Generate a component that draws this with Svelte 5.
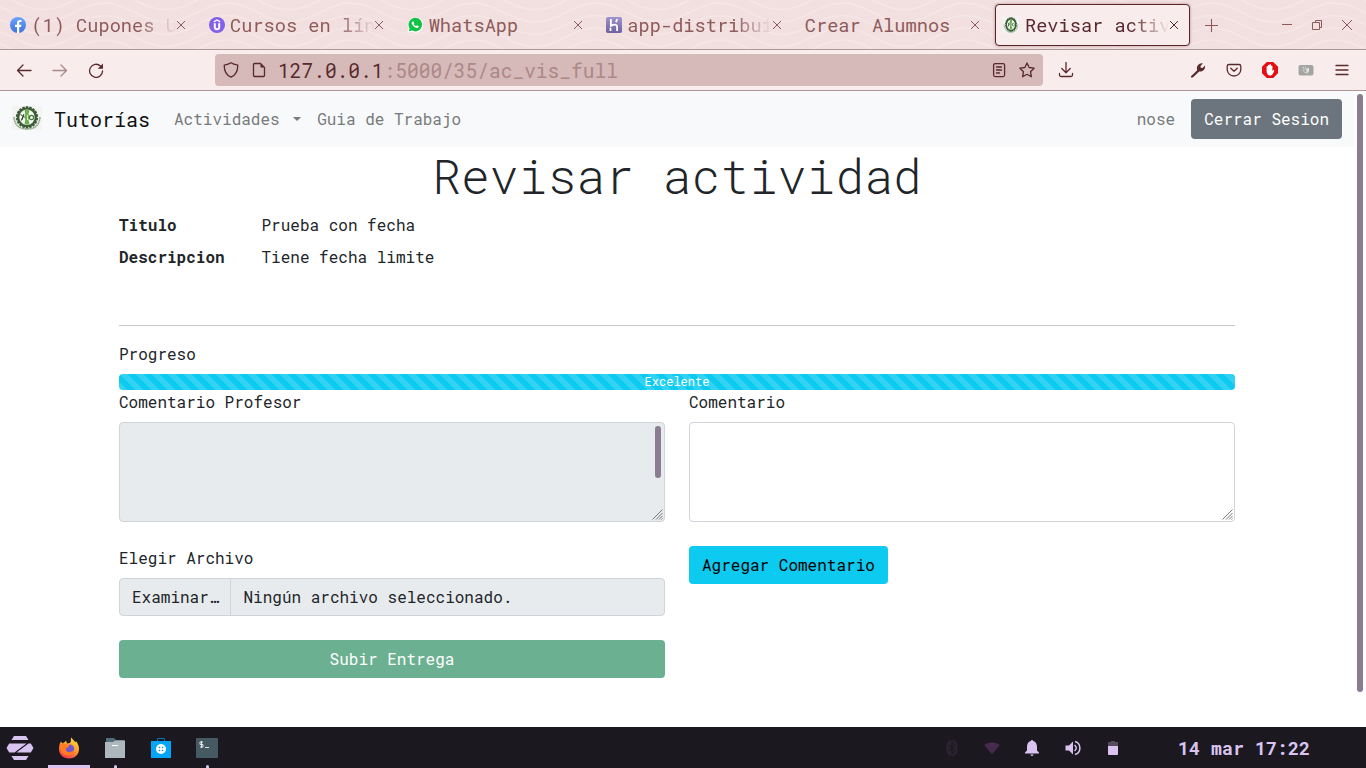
<script>
  const tabs = [
    { icon: 'facebook', title: '(1) Cupones U', fade: true },
    { icon: 'udemy', title: 'Cursos en lín', fade: true },
    { icon: 'whatsapp', title: 'WhatsApp' },
    { icon: 'heroku', title: 'app-distribui', fade: true },
    { icon: '', title: 'Crear Alumnos' },
    { icon: 'seal', title: 'Revisar activ', fade: true, active: true }
  ];

  // Decorative waves of the tab strip: 123px period, 12.3px apart.
  const half = 30.75;
  const waves = Array.from({ length: 7 }, (_, i) => {
    const y = -21.5 + i * 12.3;
    let d = `M-18.5 ${y}`;
    for (let k = 0; k < 12; k++) {
      d += ` c${half * 0.76} 0 ${half * 1.24} 19 ${half * 2} 19 s${half * 1.24} -19 ${half * 2} -19`;
    }
    return d;
  });
  const teeth = Array.from({ length: 18 }, (_, i) => i * 20);
</script>

{#snippet seal()}
  <svg class="seal" viewBox="0 0 30 24" preserveAspectRatio="none">
    <rect width="30" height="24" fill="#f4f5f3" />
    <path d="M2 11 Q3 23 15 23 Q27 23 28 11" fill="none" stroke="#7fa077" stroke-width="1.5" stroke-dasharray="1.5 .5" />
    {#each teeth as angle}
      <rect x="13.7" y="0.2" width="2.6" height="3" fill="#3c5a36" transform={`rotate(${angle} 15 11.3)`} />
    {/each}
    <circle cx="15" cy="11.3" r="8.8" fill="#f4f8f0" stroke="#3c5a36" stroke-width="2.2" />
    <path d="M12.500 4h5l-1 4.500 2 2.500-2 2.500 1 5h-5l.8-5-1.300-2.500 1.300-2.500z" fill="#69b04f" />
    <path d="M8.500 8.500l3 2-2 4M12 8l-2.500 6" fill="none" stroke="#333b32" stroke-width="1" />
    <path d="M15.500 9v5" stroke="#e7f2df" stroke-width=".9" />
    <circle cx="19.500" cy="11.500" r="2.100" fill="none" stroke="#48763e" stroke-width="1.200" />
  </svg>
{/snippet}

<div class="screen">
  <header class="tabstrip">
    <svg class="waves" viewBox="0 0 1366 49">
      {#each waves as d}<path {d} />{/each}
    </svg>
    {#each tabs as tab}
      <div class="tab" class:active={tab.active}>
        {#if tab.icon === 'facebook'}
          <svg class="fav" viewBox="0 0 16 16"><defs><linearGradient id="fb" x2="0" y2="1"><stop stop-color="#6ba4fa" /><stop offset="1" stop-color="#3f72e0" /></linearGradient></defs><circle cx="8" cy="8" r="8" fill="url(#fb)" /><path d="M7 16V10H5V7.800h2V6.300C7 4 8.100 3 10 3h1.400v2h-1c-.9 0-1.200.4-1.200 1.200v1.600h2.200L11 10H9.200v6z" fill="#fff" /></svg>
        {:else if tab.icon === 'udemy'}
          <svg class="fav" viewBox="0 0 16 16"><circle cx="8" cy="8" r="8" fill="#8460e8" /><path d="M4.800 4.800L8 3l3.200 1.800" fill="none" stroke="#fff" stroke-width="1.400" /><path d="M5.800 6.300v4q0 2 2.200 2t2.200-2v-4" fill="none" stroke="#fff" stroke-width="2" /></svg>
        {:else if tab.icon === 'whatsapp'}
          <svg class="fav" viewBox="0 0 16 16"><path d="M.3 15.800l1.200-4.200A7.800 7.800 0 1 1 4.600 14.800z" fill="#fff" /><path d="M1.800 14.300l.8-2.900A6.800 6.800 0 1 1 5 13.600z" fill="#12c348" /><path d="M5.400 4.400c-1 .7-1 2 .2 3.600 1.300 1.800 3.400 3.200 4.800 3 1-.2 1.400-.9 1.300-1.700L9.900 8.200l-.9 1c-1-.4-1.800-1.200-2.300-2.100l.6-.9-.7-1.800z" fill="#fff" /></svg>
        {:else if tab.icon === 'heroku'}
          <svg class="fav" viewBox="0 0 16 16"><defs><linearGradient id="hk" x2="0" y2="1"><stop stop-color="#9e94ce" /><stop offset="1" stop-color="#6e619f" /></linearGradient></defs><rect width="16" height="16" rx="1.800" fill="url(#hk)" /><path d="M4.900 2v6.900q3-1.500 5-1.100 1.200.3 1.200 2V14M4.500 10.800V14M11 2q0 1.800-1.300 3" fill="none" stroke="#fff" stroke-width="1.800" /></svg>
        {:else if tab.icon === 'seal'}
          <span class="fav">{@render seal()}</span>
        {/if}
        <span class="title" class:fade={tab.fade}>{tab.title}</span>
        <svg class="close" viewBox="0 0 10 10"><path d="M1 1l8 8M9 1l-8 8" /></svg>
      </div>
    {/each}
    <svg class="newtab" viewBox="0 0 12 12"><path d="M6 0v12M0 6h12" /></svg>
    <div class="winctl">
      <svg viewBox="0 0 12 12"><path d="M1 5.500h10" /></svg>
      <svg viewBox="0 0 12 12"><path d="M1.500 3.500h7v7h-7zM4.500 3.500v-2h6v7h-2" /></svg>
      <svg viewBox="0 0 12 12"><path d="M1 1l10 10M11 1L1 11" /></svg>
    </div>
  </header>

  <div class="toolbar">
    <div class="nav">
      <svg viewBox="0 0 16 16"><path d="M15 8.500H1.500M7 3L1.500 8.500 7 14" /></svg>
      <svg class="dim" viewBox="0 0 16 16"><path d="M1 8.500h13.500M9 3l5.500 5.500L9 14" /></svg>
      <svg viewBox="0 0 16 16"><path d="M14.600 8.800A6.500 6.500 0 1 1 12.500 4" /><path d="M15 1.500v5.300H9.700z" class="solid" /></svg>
    </div>
    <div class="url">
      <svg viewBox="0 0 16 16"><path d="M8 .8C6 2.300 3.800 2.800 1.200 3.200c0 5.800 1.600 9.800 6.800 12 5.200-2.200 6.800-6.200 6.800-12C12.200 2.800 10 2.300 8 .8z" /></svg>
      <svg viewBox="0 0 16 16"><path d="M3.500 1.500h6l4 4v8q0 1-1 1h-9q-1 0-1-1v-11q0-1 1-1z" /><path d="M9.500 1.500v4h4z" class="solid" /></svg>
      <span class="address"><b>127.0.0.1</b>:5000/35/ac_vis_full</span>
      <svg viewBox="0 0 16 16"><rect x="2.600" y="1.600" width="11" height="13" rx="1.500" /><path d="M5.500 5h5M5.500 8h5M5.500 11h3" /></svg>
      <svg viewBox="0 0 16 16"><path d="M8 1l2.100 4.500 5 .7-3.600 3.500.9 5L8 12.300l-4.400 2.400.9-5L.9 6.200l5-.7z" /></svg>
    </div>
    <svg class="download" viewBox="0 0 16 16"><path d="M8 .5v10M3.800 6.500L8 10.700l4.200-4.200M1.500 11.500v1.500q0 1.500 1.500 1.500h10q1.500 0 1.500-1.500v-1.500" /></svg>
    <div class="tools">
      <svg viewBox="0 0 16 16"><path class="solid" d="M1 14.300l6.200-6c-.8-2.800 0-5 2-6.300 1.300-.8 2.600-.9 3.600-.6l-2.300 2.500.2 1.800 1.900.2L15 3.500c.5 3.800-2 6.500-5.800 6L2.800 15.500H1z" /></svg>
      <svg viewBox="0 0 16 16"><path d="M3 2.500h10q1.800 0 1.800 1.800v3.200a6.800 6.500 0 0 1-13.600 0V4.300Q1.200 2.500 3 2.500z" /><path d="M4.800 6.300L8 9.300l3.200-3" /></svg>
      <svg viewBox="0 0 16 16"><path d="M4.800 0h6.400L16 4.800v6.400L11.200 16H4.800L0 11.200V4.800z" fill="#e60d12" stroke="none" /><path d="M4.600 9V4.500q.7-1 1.400 0V3.200q.8-1 1.500 0v-.7q.8-.8 1.500 0V4q.8-.9 1.400 0v5l1.200-1.200q1 .1.500 1.200c-.8 2-1.400 4.500-3.900 4.500-2.400 0-3.600-1.800-3.600-4.500z" fill="#fff" stroke="none" /></svg>
      <svg viewBox="0 0 16 16"><rect x=".500" y="3" width="15" height="10.500" rx="2" fill="#a3a5a3" stroke="none" /><path d="M5 5l1.300 2.500M7.500 5l.5 2M5 8q1.500 4 5 2.500" stroke="#dcdcda" stroke-width=".9" /><path d="M8 7.500l3-2v4l-2 1.500z" fill="#e4e4e2" stroke="none" /></svg>
      <svg viewBox="0 0 16 16"><path d="M2 3.500h12M2 8h12M2 12.500h12" /></svg>
    </div>
  </div>

  <div class="viewport">
    <div class="page">
      <nav class="navbar">
        <span class="brandlogo">{@render seal()}</span>
        <span class="brand">Tutorías</span>
        <span class="link">Actividades<i class="caret"></i></span>
        <span class="link second">Guia de Trabajo</span>
        <span class="user">nose</span>
        <button class="btn gray">Cerrar Sesion</button>
      </nav>

      <main class="container">
        <h1>Revisar actividad</h1>
        <dl>
          <dt>Titulo</dt><dd>Prueba con fecha</dd>
          <dt>Descripcion</dt><dd>Tiene fecha limite</dd>
        </dl>
        <hr />
        <div class="label">Progreso</div>
        <div class="progress">Excelente</div>
        <div class="cols">
          <section>
            <div class="label">Comentario Profesor</div>
            <div class="area disabled">
              <i class="thumb"></i>
              <svg class="grip" viewBox="0 0 11 11"><path d="M.5 10.500l10-10M4 10.500l6.500-6.500M7 10.500L10.500 7M9.500 10.500l1-1" /></svg>
            </div>
            <div class="label">Elegir Archivo</div>
            <div class="file"><span>Examinar…</span><span>Ningún archivo seleccionado.</span></div>
            <button class="btn green">Subir Entrega</button>
          </section>
          <section>
            <div class="label">Comentario</div>
            <div class="area">
              <svg class="grip" viewBox="0 0 11 11"><path d="M.5 10.500l10-10M4 10.500l6.500-6.500M7 10.500L10.500 7M9.500 10.500l1-1" /></svg>
            </div>
            <button class="btn cyan">Agregar Comentario</button>
          </section>
        </div>
      </main>
    </div>
    <div class="scroll"><i></i></div>
  </div>

  <footer class="taskbar">
    <div class="app zorin"><svg width="28" height="26" viewBox="0 0 28 26"><g fill="#d9c4f1"><path d="M8 1h12l2.500 4h-17z" /><path d="M3.200 8.500h17.300L8.500 17.500H3.200L.5 13z" /><path d="M24.800 8.500L27.500 13l-2.700 4.500H10.500L22.500 8.500z" /><path d="M5.500 21h17L20 25H8z" /></g></svg></div>
    <div class="app current">
      <svg width="22" height="22" viewBox="0 0 22 22"><defs><linearGradient id="ff" x1=".8" x2=".3" y2="1"><stop stop-color="#ffdf3c" /><stop offset=".5" stop-color="#ff9a27" /><stop offset="1" stop-color="#f33554" /></linearGradient></defs><path d="M13 .5c2.500 2 3 3.500 4.500 5l.5-1.500c2 3 3 5 3 8 0 5.500-4 9.500-10 9.500S1 17.500 1 12c0-3 .5-5 2-7.500L4.500 6.500C6 5.500 7 5 8 3.500L9 6.500l3-.5c1.500-1.500 .5-3.500 1-5.500z" fill="url(#ff)" /><circle cx="12" cy="11.800" r="4.200" fill="#7558ce" /><path d="M2.500 7.500C5 6 7 7 9 7.500l2.500 1c-.5 2-3 1.500-4 3.500 0 3.500 4 4.500 8 1.500-1 6-11 6-12.500 0-.8-2-.8-4-.5-6z" fill="#ff7d1f" /></svg>
      <i class="bar"></i>
    </div>
    <div class="app"><svg width="22" height="22" viewBox="0 0 22 22"><path d="M2 1h8l2 2h8v5H2z" fill="#526d78" /><path d="M1 5h8l2-1.500h10V21H1z" fill="#adb8be" /><path d="M8 8.500h6" stroke="#fff" /></svg><i class="dot"></i></div>
    <div class="app"><svg width="22" height="22" viewBox="0 0 22 22"><path d="M7.500 5V1.500h7V5" fill="none" stroke="#0875b7" /><path d="M1 4h20v17H1z" fill="#03a5f6" /><circle cx="11" cy="12" r="5" fill="#fff" /><g fill="#078cd5"><circle cx="9.500" cy="10.500" r=".8" /><circle cx="12.500" cy="10.500" r=".8" /><circle cx="9.500" cy="13.500" r=".8" /><circle cx="12.500" cy="13.500" r=".8" /></g></svg></div>
    <div class="app"><svg width="22" height="22" viewBox="0 0 22 22"><rect y="1" width="22" height="20" rx="1" fill="#465a64" /><path d="M7 5H4v2.500h3V10H4M5.500 4v7M9 10.500h4" fill="none" stroke="#e9eef0" stroke-width=".9" /></svg><i class="dot"></i></div>
    <div class="tray">
      <svg viewBox="0 0 16 16"><rect x="2.500" y="0" width="11" height="16" rx="5" fill="#2b2231" /><path d="M5 5l6 6-3 3V2l3 3-6 6" fill="none" stroke="#19161c" /></svg>
      <svg viewBox="0 0 16 16"><path d="M0 5Q8-.500 16 5L8 14z" fill="#452a4d" /></svg>
      <svg viewBox="0 0 16 16"><path d="M8 0q1 0 1.200 1C12 1.700 13 4 13 7v3.500l2 2v1H1v-1l2-2V7c0-3 1-5.300 3.800-6Q7 0 8 0zM6.300 14.500h3.400Q9 16 8 16t-1.700-1.500z" fill="#d9c4f1" /></svg>
      <svg viewBox="0 0 16 16"><path d="M.5 5.500H4L8 1.500v13l-4-4H.500z" fill="#d9c4f1" /><path d="M9.500 5q3.500 3 0 6M10 1.500c6.500 2 6.500 11 0 13" fill="none" stroke="#d9c4f1" stroke-width="1.500" /></svg>
      <svg viewBox="0 0 16 16"><path d="M3 2h3V1h4v1h3v4H3z" fill="#544c5c" /><path d="M3 6h10v8q0 1-1 1H4q-1 0-1-1z" fill="#d9c4f1" /></svg>
    </div>
    <span class="clock">14 mar 17:22</span>
  </footer>
</div>

<style>
  :global(body) { margin: 0; overflow: hidden; }
  .screen, .screen * { box-sizing: border-box; }
  .screen { width: 1366px; height: 768px; display: flex; flex-direction: column; background: #fff; color: #212529; font: 16px/24px "Roboto Mono", "Liberation Mono", monospace; }
  svg { display: block; flex: none; }
  .seal { width: 100%; height: 100%; }

  .tabstrip { height: 50px; flex: none; position: relative; display: flex; align-items: center; background: #f2dfdf; border-bottom: 1px solid #ac9796; }
  .waves { position: absolute; inset: 0; width: 1366px; height: 49px; }
  .waves path { fill: none; stroke: #f5e5e5; stroke-width: 2; }
  .tab { position: relative; width: 198.700px; height: 42px; padding: 0 13px 0 10px; display: flex; align-items: center; gap: 5.300px; color: #8e5b5b; font-size: 18.670px; }
  .tab.active { width: 195px; margin-left: 1.500px; padding: 0 10px 0 7px; gap: 6px; border: 1px solid #5a2528; border-radius: 4px; background: #f9ecec; color: #592a2c; box-shadow: 0 0 3px #b28f90; }
  .fav { width: 16px; height: 16px; flex: none; }
  .title { flex: 1; min-width: 0; white-space: nowrap; }
  .fade { -webkit-mask-image: linear-gradient(to left, transparent, #000 38px); mask-image: linear-gradient(to left, transparent, #000 38px); }
  .close { width: 10px; height: 10px; margin-left: -6px; }
  .close path, .newtab path, .winctl path { fill: none; stroke: currentColor; stroke-width: 1; }
  .newtab { position: relative; width: 13px; height: 13px; margin: 2px 0 0 15px; color: #8e5b5b; }
  .winctl { position: relative; display: flex; gap: 18px; margin-left: auto; padding-right: 13px; color: #8e5b5b; }
  .winctl svg { width: 12px; height: 12px; }

  .toolbar { height: 41px; flex: none; display: flex; align-items: center; background: #f9ecec; border-bottom: 1px solid #ac9796; color: #592a2c; }
  .toolbar svg { width: 16px; height: 16px; fill: none; stroke: currentColor; stroke-width: 1.300; stroke-linejoin: round; stroke-linecap: round; }
  .toolbar .solid { fill: currentColor; stroke: none; }
  .nav { width: 215px; padding-left: 16px; display: flex; gap: 20px; }
  .toolbar .dim { opacity: .5; }
  .url { width: 828px; height: 32px; display: flex; align-items: center; gap: 12px; padding: 0 8px; background: #d6b9b9; border-radius: 4px; color: #592a2c; }
  .address { flex: 1; margin: 2px 0 0 -1px; font-size: 19.550px; color: #ac8887; }
  .address b { font-weight: 400; color: #592a2c; }
  .download { margin-left: 14.500px; }
  .tools { margin-left: auto; padding-right: 16px; display: flex; gap: 20px; }

  .viewport { flex: 1; min-height: 0; display: flex; }
  .page { width: 1354px; }
  .scroll { flex: 1; padding: 3px 3px 0; }
  .scroll i { display: block; height: 598px; border-radius: 3px; background: #8b7c91; }
  .navbar { height: 56px; display: flex; align-items: center; background: #f8f9fa; padding: 0 12px; }
  .brandlogo { width: 30px; height: 24px; margin-top: -2px; }
  .brand { margin: 0 24px 0 12px; font-size: 20px; color: #111; }
  .link, .user { color: #77797b; }
  .link { display: flex; align-items: center; }
  .caret { border: 4.800px solid transparent; border-top-color: currentColor; border-bottom: 0; margin-left: 13px; }
  .second { margin-left: 16.500px; }
  .user { margin: 0 16px 0 auto; }
  .btn { display: block; height: 38px; padding: 0 13px; border: 0; border-radius: 4px; font: inherit; color: #fff; }
  .gray { height: 40px; background: #6c757d; }
  .cyan { background: #0dcaf0; color: #000; margin-top: 24px; }
  .green { width: 100%; margin-top: 24px; background: #6bb091; }

  .container { width: 1116px; margin: 0 auto; }
  h1 { margin: 0; height: 69px; font: 300 48px/58px "Roboto Mono", "Liberation Mono", monospace; text-align: center; white-space: nowrap; }
  dl { margin: 0; height: 109px; display: grid; grid-template-columns: 142.500px 1fr; grid-auto-rows: 32px; align-content: start; line-height: 17px; }
  dt { font-weight: 700; }
  dd { margin: 0; }
  hr { margin: 0 0 16px; border: 0; border-top: 1px solid #c7c8c9; }
  .label { height: 32px; }
  .progress { height: 16px; border-radius: 4px; text-align: center; font-size: 12px; line-height: 15px; color: #fff; background: linear-gradient(45deg, rgba(255,255,255,.15) 25%, transparent 25%, transparent 50%, rgba(255,255,255,.15) 50%, rgba(255,255,255,.15) 75%, transparent 75%) 0 0 / 16px 16px #0dcaf0; }
  .cols { display: grid; grid-template-columns: 546px 546px; gap: 24px; }
  .area { position: relative; height: 100px; border: 1px solid #ced4da; border-radius: 4px; }
  .disabled, .file { background: #e8ebee; }
  .area + .label { margin-top: 24px; }
  .thumb { position: absolute; right: 3px; top: 3px; width: 6px; height: 52px; border-radius: 3px; background: #8b7c91; }
  .grip { position: absolute; right: 1px; bottom: 1px; width: 11px; height: 11px; }
  .grip path { stroke: #777; stroke-width: 1; }
  .file { height: 38px; border: 1px solid #ced4da; border-radius: 4px; display: flex; line-height: 36px; }
  .file span { padding: 0 12.500px; }
  .file span:first-child { width: 111px; padding: 0 0 0 12px; border-right: 1px solid #ced4da; }

  .taskbar { height: 41px; flex: none; display: flex; align-items: center; background: #1b181f; }
  .app { position: relative; width: 42px; height: 41px; margin-right: 4px; display: flex; align-items: center; justify-content: center; }
  .zorin { width: 40px; margin-right: 8px; }
  .bar { position: absolute; left: 0; bottom: 0; width: 42px; height: 3px; background: #d9c4f1; }
  .dot { position: absolute; bottom: 0; width: 3px; height: 3px; border-radius: 2px 2px 0 0; background: #d9c4f1; }
  .tray { margin-left: auto; display: flex; gap: 24.300px; }
  .tray svg { width: 16px; height: 16px; }
  .clock { margin: 0 56px 0 57px; color: #d9c4f1; font-weight: 700; font-size: 18.330px; }
</style>
